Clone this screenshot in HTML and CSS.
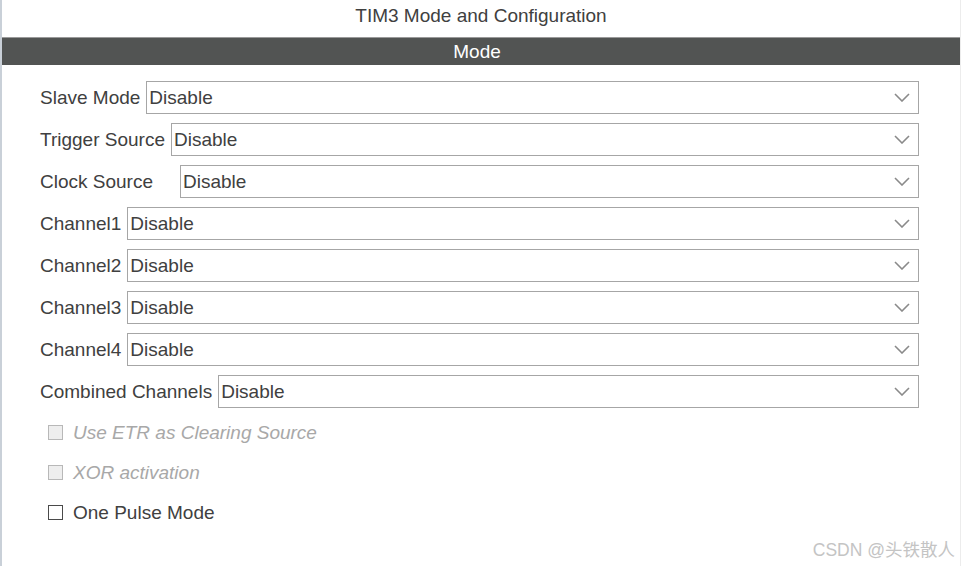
FILE: index.html
```html
<!DOCTYPE html>
<html>
<head>
<meta charset="utf-8">
<link rel="stylesheet" href="styles.css">
</head>
<body>
<div class="panel">
  <div class="title">TIM3 Mode and Configuration</div>
  <div class="bar">Mode</div>
  <div class="form">
    <div class="row"><span class="label">Slave Mode</span><div class="select"><span>Disable</span><svg class="chev" width="16" height="9" viewBox="0 0 16 9"><path d="M1 1 L8 8 L15 1" fill="none" stroke="#8a8a8a" stroke-width="1.6"/></svg></div></div>
    <div class="row"><span class="label">Trigger Source</span><div class="select"><span>Disable</span><svg class="chev" width="16" height="9" viewBox="0 0 16 9"><path d="M1 1 L8 8 L15 1" fill="none" stroke="#8a8a8a" stroke-width="1.6"/></svg></div></div>
    <div class="row"><span class="label wide">Clock Source</span><div class="select"><span>Disable</span><svg class="chev" width="16" height="9" viewBox="0 0 16 9"><path d="M1 1 L8 8 L15 1" fill="none" stroke="#8a8a8a" stroke-width="1.6"/></svg></div></div>
    <div class="row"><span class="label">Channel1</span><div class="select"><span>Disable</span><svg class="chev" width="16" height="9" viewBox="0 0 16 9"><path d="M1 1 L8 8 L15 1" fill="none" stroke="#8a8a8a" stroke-width="1.6"/></svg></div></div>
    <div class="row"><span class="label">Channel2</span><div class="select"><span>Disable</span><svg class="chev" width="16" height="9" viewBox="0 0 16 9"><path d="M1 1 L8 8 L15 1" fill="none" stroke="#8a8a8a" stroke-width="1.6"/></svg></div></div>
    <div class="row"><span class="label">Channel3</span><div class="select"><span>Disable</span><svg class="chev" width="16" height="9" viewBox="0 0 16 9"><path d="M1 1 L8 8 L15 1" fill="none" stroke="#8a8a8a" stroke-width="1.6"/></svg></div></div>
    <div class="row"><span class="label">Channel4</span><div class="select"><span>Disable</span><svg class="chev" width="16" height="9" viewBox="0 0 16 9"><path d="M1 1 L8 8 L15 1" fill="none" stroke="#8a8a8a" stroke-width="1.6"/></svg></div></div>
    <div class="row"><span class="label">Combined Channels</span><div class="select"><span>Disable</span><svg class="chev" width="16" height="9" viewBox="0 0 16 9"><path d="M1 1 L8 8 L15 1" fill="none" stroke="#8a8a8a" stroke-width="1.6"/></svg></div></div>
  </div>
  <div class="checks">
    <div class="check disabled"><span class="box"></span><span class="ctext">Use ETR as Clearing Source</span></div>
    <div class="check disabled"><span class="box"></span><span class="ctext">XOR activation</span></div>
    <div class="check"><span class="box"></span><span class="ctext">One Pulse Mode</span></div>
  </div>
  <div class="watermark">CSDN @头铁散人</div>
</div>
</body>
</html>
```
FILE: styles.css
```css
html, body {
  margin: 0;
  padding: 0;
  background: #ffffff;
}
body {
  width: 961px;
  height: 566px;
  overflow: hidden;
  font-family: "Liberation Sans", Arial, "Noto Sans CJK SC", sans-serif;
  color: #404040;
}
.panel {
  position: relative;
  height: 566px;
  border-left: 2px solid #c9d0d8;
  border-right: 1px solid #ececec;
  box-sizing: border-box;
}
.title {
  height: 37px;
  line-height: 32px;
  text-align: center;
  font-size: 19px;
  color: #404040;
}
.bar {
  height: 27px;
  border-top: 1px solid #9a9a9a;
  background: #525453;
  color: #ffffff;
  text-align: center;
  font-size: 19px;
  line-height: 27px;
  padding-right: 8px;
}
.form {
  display: flex;
  flex-direction: column;
  gap: 9px;
  padding: 16px 41px 0 38px;
}
.row {
  display: flex;
  align-items: center;
  height: 33px;
}
.label {
  font-size: 19px;
  margin-right: 6px;
  white-space: nowrap;
  color: #404040;
}
.label.wide {
  margin-right: 27px;
}
.select {
  flex: 1;
  height: 33px;
  box-sizing: border-box;
  border: 1px solid #a6a6a6;
  display: flex;
  align-items: center;
  justify-content: space-between;
  padding: 0 8px 0 2px;
  font-size: 19px;
  color: #404040;
}
.chev {
  display: block;
}
.checks {
  display: flex;
  flex-direction: column;
  gap: 17px;
  padding: 13px 0 0 46px;
}
.check {
  display: flex;
  align-items: center;
  height: 23px;
}
.box {
  width: 15px;
  height: 15px;
  box-sizing: border-box;
  border: 1px solid #4a4a4a;
  background: #ffffff;
  margin-right: 10px;
}
.ctext {
  font-size: 19px;
  color: #404040;
}
.check.disabled .box {
  border-color: #b8b8b8;
  background: #eeeeee;
}
.check.disabled .ctext {
  font-style: italic;
  color: #a8a8a8;
}
.watermark {
  position: absolute;
  right: 5px;
  bottom: 5px;
  font-size: 17.5px;
  color: #c4c4c4;
}
```
